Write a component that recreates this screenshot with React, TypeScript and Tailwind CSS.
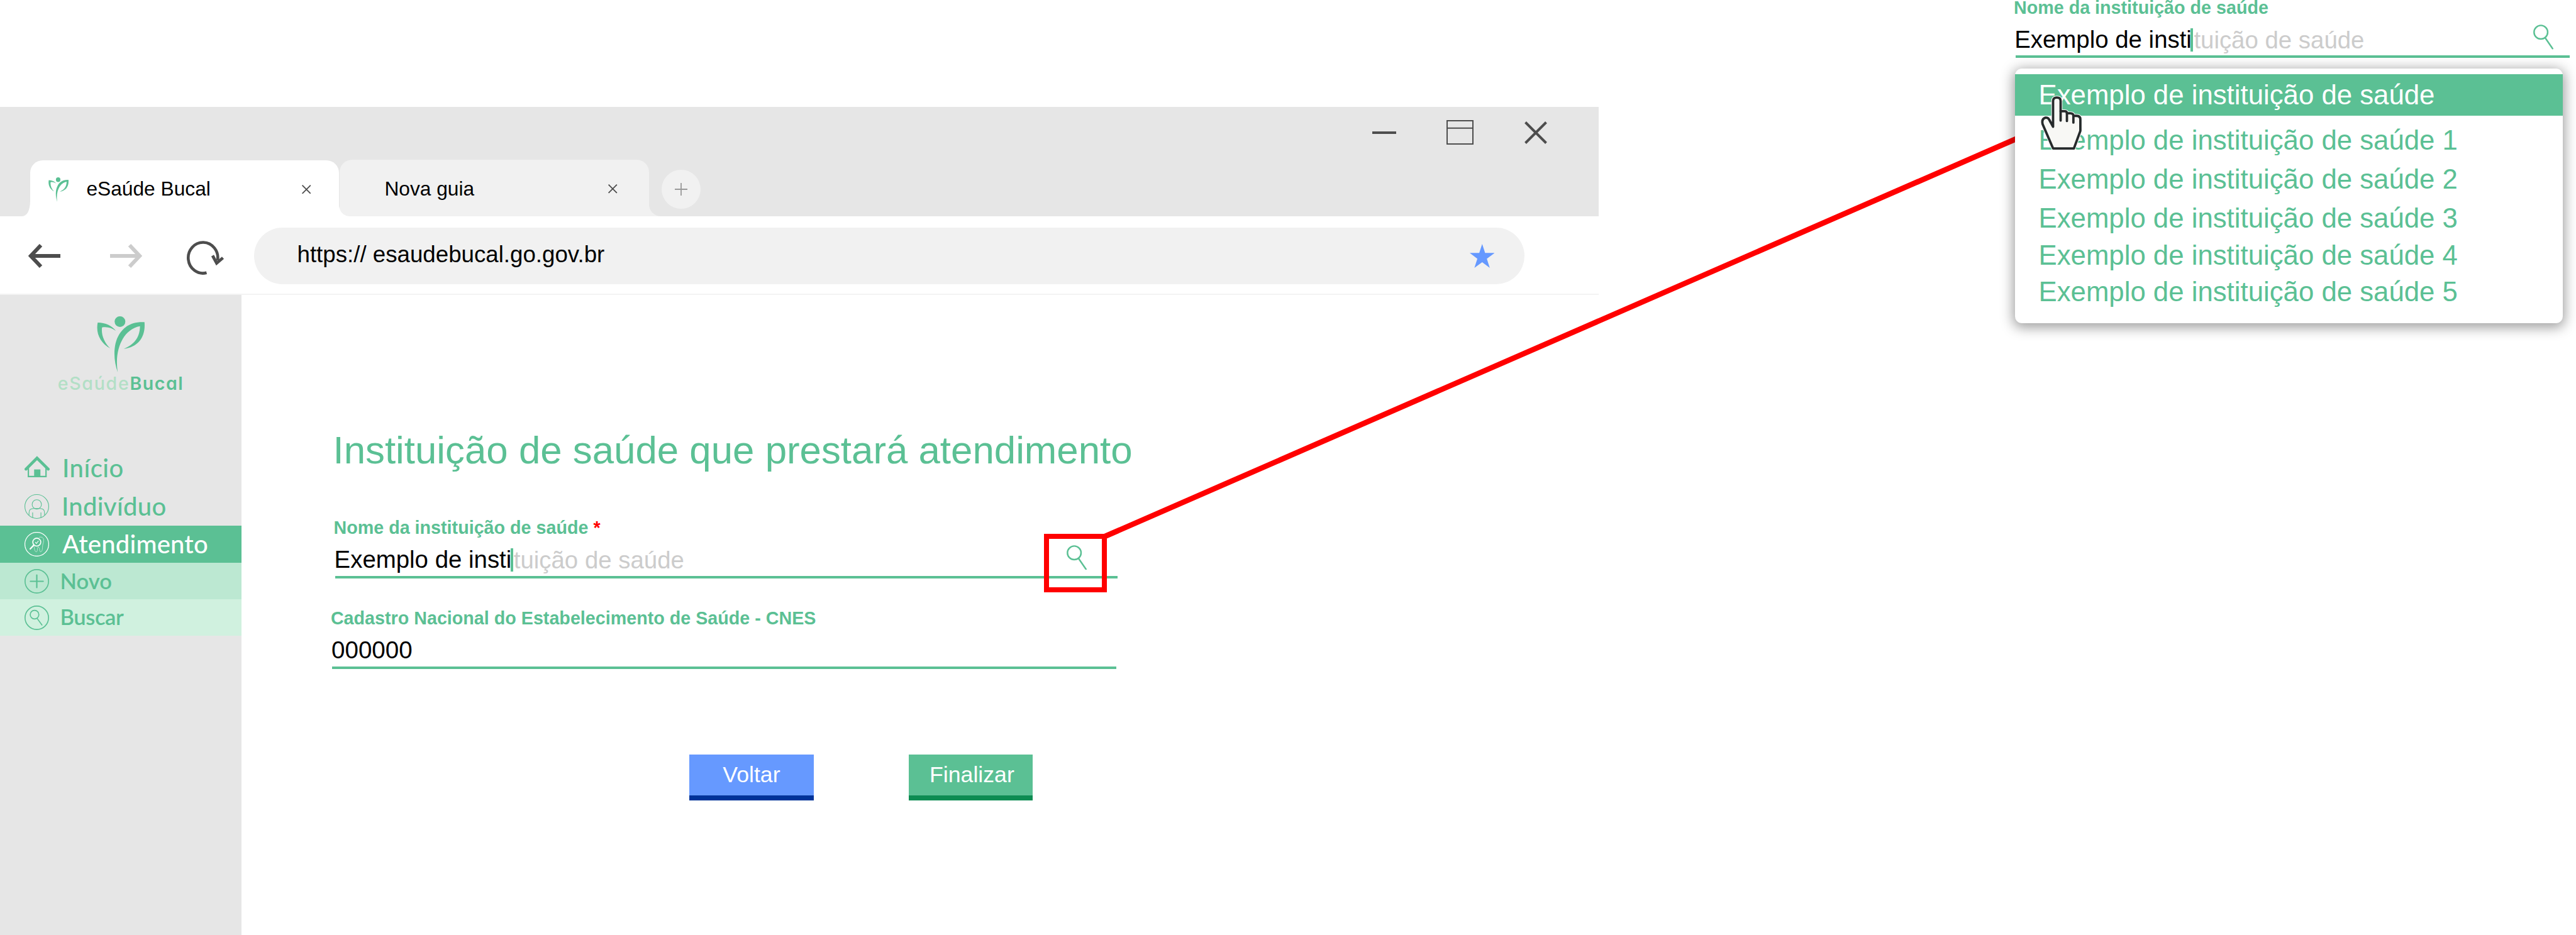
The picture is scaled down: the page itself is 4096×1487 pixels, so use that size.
import React from 'react';

const institutions = [
  { label: 'Exemplo de instituição de saúde 1', gap: 'mt-[13.7px]' },
  { label: 'Exemplo de instituição de saúde 2', gap: 'mt-[11.6px]' },
  { label: 'Exemplo de instituição de saúde 3', gap: 'mt-[12.4px]' },
  { label: 'Exemplo de instituição de saúde 4', gap: 'mt-[9.2px]' },
  { label: 'Exemplo de instituição de saúde 5', gap: 'mt-[7.8px]' },
];

function Leaf({ className }: { className: string }) {
  return (
    <svg viewBox="0 0 277 326" preserveAspectRatio="none" className={className} fill="#5bc094">
      <circle cx="134" cy="31" r="31" />
      <path d="M5 37C50 38 88 55 110 85C88 68 60 60 30 65C24 110 44 155 77 187C22 158-8 100 5 37Z" />
      <path d="M276 34C188 30 150 72 128 108C94 165 95 255 121 326C108 240 124 178 150 132C172 95 205 66 250 58C249 112 228 160 156 190C240 180 284 120 276 34Z" />
    </svg>
  );
}

function Cross({ className, width }: { className: string; width: number }) {
  return (
    <svg viewBox="0 0 36 36" className={className} stroke="#4d4d4d" strokeWidth={width} fill="none">
      <path d="M1.5 1.5 34.5 34.5M34.5 1.5 1.5 34.5" />
    </svg>
  );
}

function Magnifier({ className }: { className: string }) {
  return (
    <svg viewBox="0 0 39 48" className={className} stroke="#5bc094" strokeWidth="3" fill="none">
      <circle cx="14.8" cy="14.8" r="13.2" />
      <path d="M23 25.5 37.5 46.5" strokeLinecap="round" />
    </svg>
  );
}

function Flare({ className }: { className: string }) {
  return (
    <svg viewBox="0 0 18 24" preserveAspectRatio="none" className={className} fill="currentColor">
      <path d="M0 0C0.5 15 7 24 18 24H0Z" />
    </svg>
  );
}

function TitleBar() {
  return (
    <header className="h-[174px] bg-[#e6e6e6]">
      <div className="flex h-[81px] items-center justify-end pr-[82px]">
        <div className="h-[4px] w-[38px] bg-[#4d4d4d]" />
        <svg viewBox="0 0 43 39" className="ml-[80px] h-[39px] w-[43px]" stroke="#4d4d4d" strokeWidth="2" fill="none">
          <path d="M1 1H42V38H1ZM1 12.7H42" />
        </svg>
        <Cross className="ml-[81.5px] h-[36px] w-[36px]" width={4} />
      </div>
      <div className="flex h-[93px] items-end text-[31.7px] text-black">
        <div className="relative z-10 ml-[47.6px] flex h-[89px] w-[491px] items-center rounded-t-[20px] bg-white pt-[3px] pr-[44.5px] pl-[29.5px] text-black">
          <Leaf className="h-[39px] w-[32px]" />
          <span className="ml-[28.4px] whitespace-nowrap">eSaúde Bucal</span>
          <Cross className="ml-auto h-[14.5px] w-[14.5px]" width={4.5} />
          <Flare className="absolute bottom-0 -left-[13px] h-[24px] w-[13px] -scale-x-100 text-white" />
          <Flare className="absolute -right-[17px] bottom-0 h-[24px] w-[18px] text-white" />
        </div>
        <div className="relative ml-[1.3px] flex h-[90px] w-[492.5px] items-center rounded-t-[20px] bg-[#f1f1f1] pt-[3px] pr-[50.5px] pl-[71.5px]">
          <span className="whitespace-nowrap">Nova guia</span>
          <Cross className="ml-auto h-[14.5px] w-[14.5px]" width={4.5} />
          <Flare className="absolute -right-[20px] bottom-0 h-[24px] w-[21px] text-[#f1f1f1]" />
        </div>
        <div className="mb-[12.5px] ml-[20px] flex h-[61.5px] w-[61.5px] items-center justify-center rounded-full bg-[#f1f1f1]">
          <svg viewBox="0 0 20 20" className="h-[20px] w-[20px]" stroke="#999999" strokeWidth="1.8">
            <path d="M10 0V20M0 10H20" />
          </svg>
        </div>
      </div>
    </header>
  );
}

function AddressBar() {
  return (
    <div className="flex h-[125px] items-center border-b-2 border-[#f3f3f3] pt-[3px] pl-[44.8px]">
      <svg viewBox="0 0 51 38" className="h-[38px] w-[51px]" stroke="#4d4d4d" strokeWidth="6" fill="none">
        <path d="M51 19H5M20 2 4 19 20 36" />
      </svg>
      <svg viewBox="0 0 51 38" className="ml-[79.5px] h-[38px] w-[51px]" stroke="#cccccc" strokeWidth="6" fill="none">
        <path d="M0 19H46M31 2 47 19 31 36" />
      </svg>
      <svg viewBox="0 0 61 54" className="mt-[6px] ml-[70px] h-[54px] w-[61px]" stroke="#4d4d4d" strokeWidth="4.6" fill="none">
        <path d="M32.5 50.8A23.5 24.5 0 1 1 50 31" />
        <path d="M42 23.5 48.5 35.5 58.5 27" strokeWidth="4.8" />
      </svg>
      <div className="ml-[46.6px] flex h-[89.5px] w-[2020.4px] items-center rounded-full bg-[#f1f1f1] pr-[48px] pl-[68.6px]">
        <span className="-mt-[5px] text-[36.7px] whitespace-pre text-black">https:// esaudebucal.go.gov.br</span>
        <svg viewBox="0 0 144 138" className="ml-auto h-[38px] w-[39.5px]" fill="#6699ff">
          <path d="M72 0 89 52H144L99 85 116 138 72 105 27 138 44 85 0 52H55Z" />
        </svg>
      </div>
    </div>
  );
}

function HomeIcon() {
  return (
    <svg viewBox="0 0 147 126" className="-mt-[6px] h-[34px] w-[40px]" fill="none" stroke="#5bc094">
      <path d="M8 78 73 13 139 78" strokeWidth="17" strokeLinecap="round" />
      <path d="M22 70V122H126V70" strokeWidth="8" />
      <path d="M56 80H93V122H56Z" fill="#5bc094" stroke="none" />
    </svg>
  );
}

function PersonIcon() {
  return (
    <svg viewBox="0 0 142 142" className="h-[39px] w-[39px]" fill="none" stroke="#5bc094" strokeWidth="4">
      <circle cx="71" cy="71" r="69" />
      <circle cx="71" cy="59" r="27" />
      <path d="M26 122V108Q26 83 52 83H90Q116 83 116 108V122M47 106V136M95 106V136" />
    </svg>
  );
}

function CareIcon() {
  return (
    <svg viewBox="0 0 142 142" className="h-[39px] w-[39px]" fill="none" stroke="#ffffff" strokeWidth="4.5">
      <circle cx="71" cy="71" r="69" />
      <circle cx="71" cy="59" r="23" strokeWidth="6" />
      <path d="M54 76 33 98" strokeWidth="8" strokeLinecap="round" />
      <path d="M62 59 69 67 81 51" strokeWidth="4" />
      <path d="M84 31C100 26 112 34 111 50C110 66 104 72 104 88C104 104 100 115 93 115C85 115 90 88 80 88C71 88 78 115 68 115C60 115 56 98 56 84" strokeWidth="2" />
    </svg>
  );
}

function PlusIcon() {
  return (
    <svg viewBox="0 0 142 142" className="h-[39px] w-[39px]" fill="none" stroke="#5bc094" strokeWidth="6">
      <circle cx="71" cy="71" r="68" />
      <path d="M71 35V107M34 71H108" strokeWidth="8" strokeLinecap="round" />
    </svg>
  );
}

function SearchIcon() {
  return (
    <svg viewBox="0 0 142 142" className="h-[39px] w-[39px]" fill="none" stroke="#5bc094" strokeWidth="6">
      <circle cx="71" cy="71" r="68" />
      <circle cx="58" cy="53" r="25" />
      <path d="M74 76 101 113" strokeLinecap="round" />
    </svg>
  );
}

function Sidebar() {
  return (
    <aside className="flex w-[384px] flex-col bg-[#e6e6e6] font-['Lato',sans-serif] text-[#5bc094]">
      <div className="flex h-[245px] flex-col items-center pt-[33.5px]">
        <Leaf className="h-[89px] w-[76px]" />
        <div className="mt-[1px] text-[28.6px] leading-[34px] whitespace-nowrap [font-family:'Inter',sans-serif] [font-feature-settings:'cv11']">
          <span className="font-medium tracking-[1.7px] text-[#b3dfc6]">eSaúde</span>
          <span className="font-semibold tracking-[1.5px]">Bucal</span>
        </div>
      </div>
      <nav className="font-medium">
        <div className="flex h-[61px] items-center pl-[39px]">
          <HomeIcon />
          <span className="-mt-[2px] ml-[20px] text-[40px] tracking-[0.5px]">Início</span>
        </div>
        <div className="flex h-[61px] items-center pl-[39px]">
          <PersonIcon />
          <span className="-mt-[1px] ml-[20px] text-[40px] tracking-[0.3px]">Indivíduo</span>
        </div>
        <div className="flex h-[59px] items-center bg-[#5bc094] pl-[39px] text-white">
          <CareIcon />
          <span className="-mt-[1px] ml-[21px] text-[40px] tracking-[0.2px]">Atendimento</span>
        </div>
        <div className="flex h-[58px] items-center bg-[#bce8d2] pl-[39px]">
          <PlusIcon />
          <span className="ml-[17.5px] text-[34.5px] font-semibold">Novo</span>
        </div>
        <div className="flex h-[58px] items-center bg-[#d0f1df] pl-[39px]">
          <SearchIcon />
          <span className="-mt-[2px] ml-[17.5px] text-[34.5px] font-semibold tracking-[-0.4px]">Buscar</span>
        </div>
      </nav>
    </aside>
  );
}

function TypedName() {
  return (
    <div className="flex text-[38.4px] leading-[44px] whitespace-nowrap">
      <span className="text-black">Exemplo de insti</span>
      <span className="mt-[4px] -ml-[1.5px] h-[37px] w-[4px] bg-[#5bc094]" />
      <span className="ml-[1px] translate-y-[1px] text-[#cccccc]">tuição de saúde</span>
    </div>
  );
}

function InstitutionForm() {
  return (
    <main className="flex flex-col items-start pt-[211.3px] pl-[145.5px] text-[#5bc094]">
      <h1 className="text-[61.8px] leading-[72px] whitespace-nowrap">Instituição de saúde que prestará atendimento</h1>
      <label className="mt-[70.9px] ml-[1px] text-[28.7px] leading-[32px] font-bold whitespace-nowrap">
        Nome da instituição de saúde <span className="text-[#ff0000]">*</span>
      </label>
      <div className="relative mt-[13.9px] ml-[3.5px] h-[51px] w-[1243.5px] border-b-4 border-[#5bc094]">
        <div className="-mt-[1px] -ml-[1.4px]">
          <TypedName />
        </div>
        <Magnifier className="absolute top-[-2.5px] right-[48.5px] h-[39.5px] w-[32px]" />
        <div className="absolute top-[-20px] right-[16.5px] h-[93px] w-[100px] border-8 border-[#ff0000]" />
      </div>
      <label className="mt-[46.6px] -ml-[3.6px] text-[28.7px] leading-[32px] font-bold whitespace-nowrap">
        Cadastro Nacional do Estabelecimento de Saúde - CNES
      </label>
      <div className="mt-[13.3px] -ml-[1.5px] h-[52px] w-[1247px] border-b-4 border-[#5bc094]">
        <div className="-ml-[1px] text-[38.6px] leading-[44px] text-black">000000</div>
      </div>
      <div className="mt-[136px] ml-[566.7px] flex gap-[151px] text-[35.7px] text-white">
        <button className="flex h-[73px] w-[197.5px] items-center justify-center border-b-8 border-[#003399] bg-[#6699ff]">Voltar</button>
        <button className="flex h-[73px] w-[197.5px] items-center justify-center border-b-8 border-[#0d8c52] bg-[#5bc094] pl-[4px]">Finalizar</button>
      </div>
    </main>
  );
}

function HandCursor({ className }: { className: string }) {
  return (
    <svg viewBox="0 0 79 104" className={className} strokeLinejoin="round" strokeLinecap="round">
      <path d="M23.7 59V9Q23.7 2.5 31 2.5Q38.3 2.5 38.3 9V29H46Q50.5 29 50.5 33H57Q63 33 63 38H69Q76.5 38 76.5 45V67L64 101H23.7L3.5 54Q1 44 9 41.5Q14 41 16 45Z" fill="#f8f8f5" stroke="#ffffff" strokeWidth="7" />
      <path d="M23.7 59V9Q23.7 2.5 31 2.5Q38.3 2.5 38.3 9V29H46Q50.5 29 50.5 33H57Q63 33 63 38H69Q76.5 38 76.5 45V67L64 101H23.7L3.5 54Q1 44 9 41.5Q14 41 16 45Z" fill="#f8f8f5" stroke="#262a2b" strokeWidth="4.6" />
      <path d="M38.3 29V47M50.5 33V48M63 38V51" fill="none" stroke="#262a2b" strokeWidth="4.6" />
    </svg>
  );
}

function SuggestionCallout() {
  return (
    <section className="relative ml-[660px] w-[894px] text-[#5bc094]">
      <div className="text-[28.7px] leading-[24.8px] font-bold whitespace-nowrap">Nome da instituição de saúde</div>
      <div className="relative mt-[16px] ml-[3px] h-[51px] w-[880.5px] border-b-4 border-[#5bc094]">
        <div className="-ml-[1.8px]">
          <TypedName />
        </div>
        <Magnifier className="absolute top-[-1.5px] right-[25.5px] h-[39.5px] w-[32px]" />
      </div>
      <div className="relative mt-[17px] ml-[2px] h-[405.5px] w-[871px] rounded-[11px] bg-white pt-[9.5px] text-[43.75px] leading-[50px] whitespace-nowrap shadow-[0_4px_20px_3px_rgba(0,0,0,0.38)]">
        <div className="flex h-[66px] items-center bg-[#5bc094] pl-[37.5px] text-white">Exemplo de instituição de saúde</div>
        {institutions.map((item) => (
          <div key={item.label} className={`h-[50px] pl-[37.5px] ${item.gap}`}>
            {item.label}
          </div>
        ))}
        <HandCursor className="absolute top-[44px] left-[40.5px] h-[85.5px] w-[65px] overflow-visible" />
      </div>
    </section>
  );
}

export default function App() {
  return (
    <div className="relative flex h-[1487px] w-[4096px] items-start overflow-hidden bg-white [font-family:'Liberation_Sans',Arial,sans-serif]">
      <div className="mt-[170px] flex h-[1317px] w-[2542px] shrink-0 flex-col">
        <TitleBar />
        <AddressBar />
        <div className="flex flex-1">
          <Sidebar />
          <InstitutionForm />
        </div>
      </div>
      <svg viewBox="0 0 4096 1487" className="pointer-events-none absolute inset-0 h-[1487px] w-[4096px]">
        <line x1="1757" y1="853" x2="3210" y2="219" stroke="#ff0000" strokeWidth="8.6" />
      </svg>
      <SuggestionCallout />
    </div>
  );
}
